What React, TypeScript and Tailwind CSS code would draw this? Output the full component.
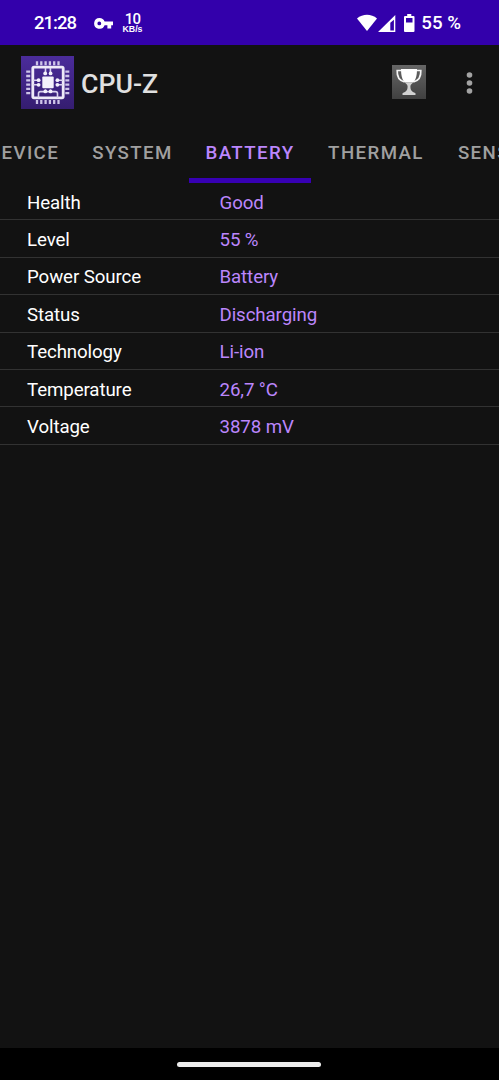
const TABS = [
  { label: "DEVICE", width: "w-[105px]" },
  { label: "SYSTEM", width: "w-[113px]" },
  { label: "BATTERY", width: "w-[122px]" },
  { label: "THERMAL", width: "w-[130px]" },
  { label: "SENSORS", width: "w-[126px]" },
];

const ROWS = [
  ["Health", "Good"],
  ["Level", "55 %"],
  ["Power Source", "Battery"],
  ["Status", "Discharging"],
  ["Technology", "Li-ion"],
  ["Temperature", "26,7 °C"],
  ["Voltage", "3878 mV"],
];

function StatusBar() {
  return (
    <div className="flex h-[45px] shrink-0 items-center bg-[#3300ab] pl-[34px] pr-[38px] text-white">
      <span className="w-[60px] pt-[2px] text-[18.5px] font-medium leading-none tracking-[-1px]">21:28</span>
      <svg className="mt-[2px] h-[11px] w-[19px]" viewBox="0 0 19 11" fill="currentColor">
        <path
          fillRule="evenodd"
          d="M5.5 0A5.4 5.4 0 0 1 10.6 3.6H19V7.3H17.2V10.6H13.4V7.3H10.6A5.4 5.4 0 1 1 5.5 0ZM5.3 3.5a1.9 1.9 0 1 0 0 3.8a1.9 1.9 0 0 0 0-3.8Z"
        />
      </svg>
      <div className="ml-[9px] mt-[2px] flex w-[21px] flex-col items-center">
        <span className="text-[15px] font-medium leading-[12px] tracking-[-0.7px]">10</span>
        <span className="font-['Liberation_Sans',sans-serif] text-[8.8px] font-bold leading-[9px]">KB/s</span>
      </div>
      <svg className="ml-auto h-[17px] w-[20px]" viewBox="0 0 20 17" fill="currentColor">
        <path d="M10 17L0 4.4C5.8-.6 14.2-.6 20 4.4Z" />
      </svg>
      <svg className="ml-px mt-px h-[17px] w-[18px]" viewBox="0 0 18 17" fill="currentColor">
        <path fillRule="evenodd" d="M17.3 0V17H0ZM15.9 4.8L12.3 7.8V15.4H15.9Z" />
      </svg>
      <svg className="ml-[8px] mt-px h-[18px] w-[11px]" viewBox="0 0 11 18" fill="currentColor">
        <path
          fillRule="evenodd"
          d="M3.2 0H7.3V2H9.5Q10.5 2 10.5 3V17Q10.5 18 9.5 18H1Q0 18 0 17V3Q0 2 1 2H3.2ZM2 4V8.5H8.5V4Z"
        />
      </svg>
      <span className="ml-[6px] pt-[2px] text-[18.7px] font-medium leading-none">55 %</span>
    </div>
  );
}

function ChipLogo() {
  const pins = [16, 20.3, 24.6, 28.9, 33.2, 37.5];
  return (
    <svg className="h-[53px] w-[53px]" viewBox="0 0 53 53">
      <defs>
        <linearGradient id="chip" x1="0" y1="0" x2="0" y2="1">
          <stop offset="0" stopColor="#4b2c9b" />
          <stop offset="1" stopColor="#351d70" />
        </linearGradient>
      </defs>
      <rect width="53" height="53" fill="url(#chip)" />
      <g stroke="#cdc4e8" strokeWidth="2.3">
        {pins.map((p) => (
          <path key={p} d={`M${p} 5.2V9.2M${p} 44V48M5.2 ${p - 0.3}H9.2M44.3 ${p - 0.3}H48.3`} />
        ))}
      </g>
      <rect x="11.8" y="11.2" width="30.4" height="30.6" rx="1.2" fill="none" stroke="#eeeaf8" strokeWidth="2.8" />
      <g stroke="#d9d1ee" strokeWidth="1.6" fill="none">
        <path d="M24.5 12V17M29.4 12V17M12 24.2H17.5M12 28.8H17.5M36.5 24.2H42M36.5 28.8H42M24.5 33.5V35.6M29.4 33.5V35.6M17.5 42V37.5Q17.5 35.6 19.5 35.6H34.5Q36.5 35.6 36.5 37.5V42" />
      </g>
      <g fill="#f3f0fb">
        <rect x="21.3" y="20.5" width="11.4" height="11.8" rx="1" />
        <circle cx="24.2" cy="17.4" r="1.9" />
        <circle cx="29.6" cy="17.4" r="1.9" />
        <circle cx="17.6" cy="24.2" r="1.9" />
        <circle cx="17.6" cy="28.8" r="1.9" />
        <circle cx="36.4" cy="24.2" r="1.9" />
        <circle cx="36.4" cy="28.8" r="1.9" />
        <circle cx="24.3" cy="35.4" r="1.9" />
        <circle cx="29.6" cy="35.4" r="1.9" />
      </g>
    </svg>
  );
}

function Trophy() {
  return (
    <svg className="h-[34px] w-[34px]" viewBox="0 0 34 34">
      <defs>
        <linearGradient id="tile" x1="0" y1="0" x2="0" y2="1">
          <stop offset="0" stopColor="#666" />
          <stop offset="1" stopColor="#404040" />
        </linearGradient>
      </defs>
      <rect width="34" height="34" fill="url(#tile)" />
      <path
        d="M9.5 5.5H5.2C4.8 12 8 15.8 12.6 17M24.5 5.5H28.8C29.2 12 26 15.8 21.4 17"
        fill="none"
        stroke="#f5f5f5"
        strokeWidth="1.7"
      />
      <path d="M9 4H25C25 10 24 15 21 17.4H13C10 15 9 10 9 4Z" fill="#fff" />
      <path
        d="M13 17.4H21C20 19 18.4 19.4 18.4 21.3C18.4 25 19.5 26.8 23.5 28.2V30H10.5V28.2C14.5 26.8 15.6 25 15.6 21.3C15.6 19.4 14 19 13 17.4Z"
        fill="#d2d2d2"
      />
    </svg>
  );
}

function Toolbar() {
  return (
    <header className="flex h-[75px] shrink-0 items-center pl-[21px] pr-[26px]">
      <ChipLogo />
      <h1 className="ml-[7px] pt-[3px] text-[26.7px] font-medium leading-none text-[#e0e0e0]">CPU-Z</h1>
      <button className="-mt-[2px] ml-auto" title="Ranking">
        <Trophy />
      </button>
      <button className="ml-[40.5px]" title="More options">
        <svg className="h-[22px] w-[7px]" viewBox="0 0 7 22" fill="#a3a3a3">
          <circle cx="3.5" cy="3" r="2.8" />
          <circle cx="3.5" cy="11" r="2.8" />
          <circle cx="3.5" cy="19" r="2.8" />
        </svg>
      </button>
    </header>
  );
}

function TabBar() {
  return (
    <nav className="flex h-[63px] shrink-0 overflow-hidden">
      <div className="-ml-[29.5px] flex">
        {TABS.map((tab) => (
          <button
            key={tab.label}
            className={`flex shrink-0 flex-col items-center text-[18.7px] font-medium tracking-[1.4px] ${tab.width} ${
              tab.label === "BATTERY" ? "text-[#bb86fc]" : "text-[#a0a0a0]"
            }`}
          >
            <span className="flex h-[57.5px] items-center pl-px pt-[9px] leading-none">{tab.label}</span>
            {tab.label === "BATTERY" && <span className="h-[5.5px] w-full bg-[#3700b3]" />}
          </button>
        ))}
      </div>
    </nav>
  );
}

export default function App() {
  return (
    <main className="flex h-[1080px] w-full flex-col overflow-hidden bg-[#121212] font-['Roboto',sans-serif]">
      <StatusBar />
      <Toolbar />
      <TabBar />
      <section className="flex-1 text-[18.7px] leading-none tracking-[-0.1px]">
        {ROWS.map(([label, value]) => (
          <div key={label} className="flex h-[37.42px] items-center border-b-[1.4px] border-[#323232] pl-[27px] pt-[3.4px]">
            <span className="w-[192.5px] text-white">{label}</span>
            <span className="text-[#bb86fc]">{value}</span>
          </div>
        ))}
      </section>
      <footer className="flex h-8 shrink-0 items-center justify-center bg-black">
        <div className="mr-px h-[5px] w-[144px] rounded-full bg-[#ececec]" />
      </footer>
    </main>
  );
}
